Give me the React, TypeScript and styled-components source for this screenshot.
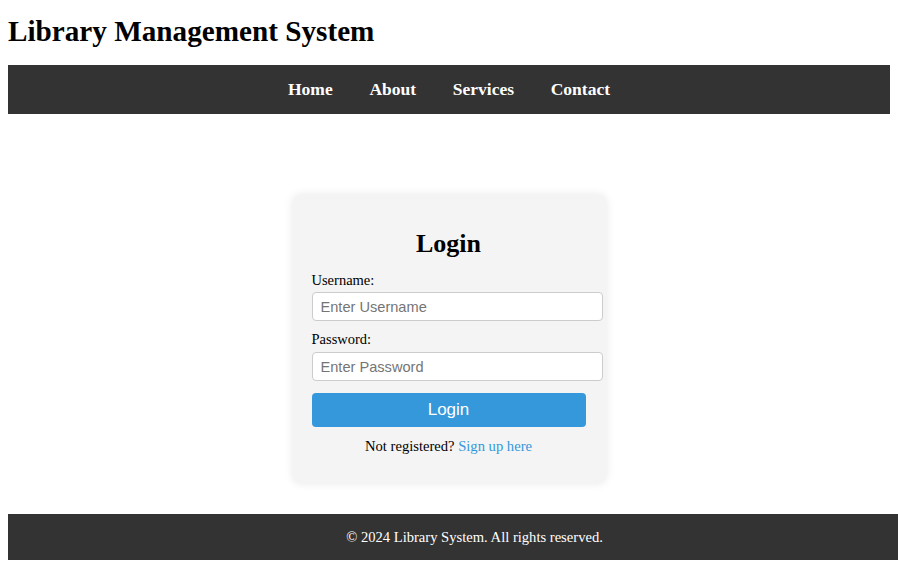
import React from "react";
import styled, { createGlobalStyle } from "styled-components";

const GlobalStyle = createGlobalStyle`
  html, body {
    margin: 0;
    padding: 0;
    background: #ffffff;
    overflow-x: hidden;
  }
  body {
    font-family: "Liberation Serif", "Times New Roman", serif;
    color: #000;
  }
`;

const Page = styled.div`
  padding: 0 8px;
  display: flex;
  flex-direction: column;
`;

const Title = styled.h1`
  margin: 15px 0 16.5px;
  font-size: 29.2px;
  font-weight: bold;
  line-height: normal;
`;

const NavBar = styled.nav`
  height: 49px;
  background: #333333;
  display: flex;
  justify-content: center;
  align-items: center;
  gap: 36.7px;
`;

const NavLink = styled.a`
  color: #ffffff;
  font-weight: bold;
  font-size: 17.5px;
  text-decoration: none;
`;

const Main = styled.main`
  display: flex;
  justify-content: center;
  padding: 81px 0 31px;
`;

const Card = styled.div`
  width: 274px;
  padding: 34px 20px 28.7px 19px;
  background: #f4f4f4;
  border-radius: 8px;
  box-shadow: 0 0 10px rgba(0, 0, 0, 0.1);
`;

const CardTitle = styled.h2`
  margin: 0 0 13.2px;
  text-align: center;
  font-size: 26px;
  font-weight: bold;
  line-height: normal;
`;

const Label = styled.label`
  display: block;
  font-size: 14.5px;
  line-height: normal;
  margin-bottom: 3.7px;
`;

const Input = styled.input`
  display: block;
  box-sizing: content-box;
  width: calc(100% - 1px);
  height: 27px;
  padding: 0 8px;
  margin: 0 0 10px;
  border: 1px solid #cccccc;
  border-radius: 4px;
  background: #ffffff;
  font-family: "Liberation Sans", Arial, sans-serif;
  font-size: 14.6px;
  outline: none;
  &::placeholder {
    color: #757575;
  }
`;

const SubmitButton = styled.button`
  display: block;
  width: 100%;
  height: 34px;
  margin-top: 12px;
  border: none;
  border-radius: 4px;
  background: #3498db;
  color: #ffffff;
  font-family: "Liberation Sans", Arial, sans-serif;
  font-size: 17px;
  cursor: pointer;
`;

const Note = styled.p`
  margin: 10.6px 0 0;
  text-align: center;
  font-size: 14.6px;
  line-height: normal;
`;

const NoteLink = styled.a`
  color: #3498db;
  text-decoration: none;
`;

const Footer = styled.footer`
  box-sizing: content-box;
  width: 100%;
  padding: 14.5px 25.5px;
  background: #333333;
  color: #ffffff;
  text-align: center;
  font-size: 14.6px;
  line-height: normal;
`;

export default function App() {
  return (
    <>
      <GlobalStyle />
      <Page>
        <Title>Library Management System</Title>
        <NavBar>
          <NavLink href="#">Home</NavLink>
          <NavLink href="#">About</NavLink>
          <NavLink href="#">Services</NavLink>
          <NavLink href="#">Contact</NavLink>
        </NavBar>
        <Main>
          <Card>
            <CardTitle>Login</CardTitle>
            <form onSubmit={(e) => e.preventDefault()}>
              <Label htmlFor="username">Username:</Label>
              <Input id="username" type="text" placeholder="Enter Username" />
              <Label htmlFor="password">Password:</Label>
              <Input id="password" type="password" placeholder="Enter Password" />
              <SubmitButton type="submit">Login</SubmitButton>
            </form>
            <Note>
              Not registered? <NoteLink href="#">Sign up here</NoteLink>
            </Note>
          </Card>
        </Main>
        <Footer>© 2024 Library System. All rights reserved.</Footer>
      </Page>
    </>
  );
}
